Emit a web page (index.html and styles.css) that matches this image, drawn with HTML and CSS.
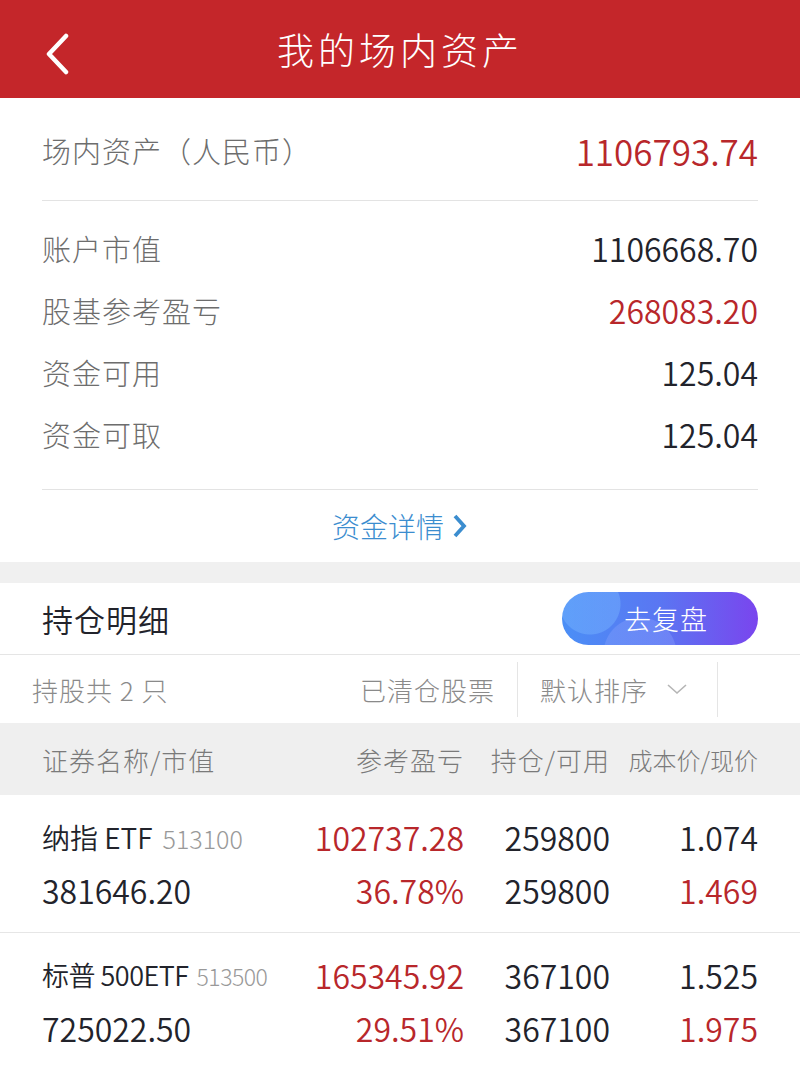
FILE: index.html
```html
<!DOCTYPE html>
<html lang="zh-CN">
<head>
    <meta charset="UTF-8">
    <title>我的场内资产</title>
    <meta name="viewport" content="width=device-width, initial-scale=1">
    <link rel="stylesheet" href="styles.css">
</head>
<body>
    <div class="topbar">
        <svg class="back" width="30" height="42" viewBox="0 0 30 42">
            <path d="M24 3 L7 21 L24 39" fill="none" stroke="#fff" stroke-width="4.5" stroke-linecap="round" stroke-linejoin="round"/>
        </svg>
        <h1>我的场内资产</h1>
    </div>

    <div class="summary">
        <div class="total">
            <span class="label">场内资产（人民币）</span>
            <span class="big red">1106793.74</span>
        </div>
        <div class="list">
            <div class="line"><span class="label">账户市值</span><span class="num">1106668.70</span></div>
            <div class="line"><span class="label">股基参考盈亏</span><span class="num red">268083.20</span></div>
            <div class="line"><span class="label">资金可用</span><span class="num">125.04</span></div>
            <div class="line"><span class="label">资金可取</span><span class="num">125.04</span></div>
        </div>
        <div class="more">
            资金详情
            <svg width="16" height="26" viewBox="0 0 16 26">
                <path d="M3 3 L12 13 L3 23" fill="none" stroke="#3b8dcf" stroke-width="3.8" stroke-linejoin="miter"/>
            </svg>
        </div>
    </div>

    <div class="holding-head">
        <h2>持仓明细</h2>
        <button class="review" type="button">去复盘</button>
    </div>

    <div class="filter">
        <span class="count">持股共 2 只</span>
        <span class="cleared">已清仓股票</span>
        <span class="sort">默认排序
            <svg width="22" height="12" viewBox="0 0 22 12">
                <path d="M2 2 L11 10 L20 2" fill="none" stroke="#b5b5b5" stroke-width="1.6"/>
            </svg>
        </span>
        <span class="blank"></span>
    </div>

    <div class="thead">
        <span>证券名称/市值</span>
        <span class="r">参考盈亏</span>
        <span class="r">持仓/可用</span>
        <span class="r small">成本价/现价</span>
    </div>

    <div class="stock">
        <span class="name">纳指 ETF<em>513100</em></span>
        <span class="r red">102737.28</span>
        <span class="r">259800</span>
        <span class="r">1.074</span>
        <span>381646.20</span>
        <span class="r red">36.78%</span>
        <span class="r">259800</span>
        <span class="r red">1.469</span>
    </div>

    <div class="stock">
        <span class="name long">标普 500ETF<em>513500</em></span>
        <span class="r red">165345.92</span>
        <span class="r">367100</span>
        <span class="r">1.525</span>
        <span>725022.50</span>
        <span class="r red">29.51%</span>
        <span class="r">367100</span>
        <span class="r red">1.975</span>
    </div>
</body>
</html>
```

FILE: styles.css
```css
body, html {
    margin: 0;
    padding: 0;
    font-family: "Noto Sans CJK SC", "Noto Sans", sans-serif;
    font-weight: 300;
    background-color: #fff;
    color: #22232b;
}

.red {
    color: #b8272b;
}

.topbar {
    height: 98px;
    background-color: #c4262a;
    display: flex;
    align-items: center;
    justify-content: center;
    position: relative;
}

.topbar .back {
    position: absolute;
    left: 42px;
    top: 33px;
}

.topbar h1 {
    margin: 0;
    color: #fff;
    font-size: 37px;
    font-weight: 300;
    letter-spacing: 4px;
}

.summary {
    padding: 0 42px;
}

.total {
    height: 103px;
    padding-top: 2px;
    box-sizing: border-box;
    display: flex;
    align-items: center;
    justify-content: space-between;
    border-bottom: 1px solid #e3e3e3;
}

.label {
    color: #6d6d6d;
    font-size: 29px;
    letter-spacing: 1px;
}

.big {
    font-size: 35px;
    font-weight: 350;
}

.list {
    padding: 16px 0 24px;
    border-bottom: 1px solid #e3e3e3;
}

.line {
    height: 62px;
    display: flex;
    align-items: center;
    justify-content: space-between;
}

.num {
    font-size: 32px;
    font-weight: 350;
}

.more {
    height: 72px;
    display: flex;
    align-items: center;
    justify-content: center;
    gap: 8px;
    color: #3b8dcf;
    font-size: 28px;
}

.holding-head {
    border-top: 21px solid #f0f0f0;
    height: 93px;
    box-sizing: border-box;
    padding: 0 42px;
    display: flex;
    align-items: center;
    justify-content: space-between;
    border-bottom: 1px solid #e5e5e5;
}

.holding-head h2 {
    margin: 0;
    font-size: 31px;
    font-weight: 350;
    letter-spacing: 1px;
}

.review {
    width: 196px;
    height: 53px;
    border: none;
    border-radius: 27px;
    color: #fff;
    font-family: inherit;
    font-weight: 300;
    font-size: 27px;
    letter-spacing: 1px;
    padding: 0 0 0 12px;
    background:
        radial-gradient(circle at 28px 12px, rgba(120, 180, 255, 0.45) 0, rgba(120, 180, 255, 0.45) 30px, transparent 31px),
        radial-gradient(circle at 78px 62px, rgba(150, 170, 255, 0.3) 0, rgba(150, 170, 255, 0.3) 36px, transparent 37px),
        linear-gradient(90deg, #4b8ff6, #5a76f2 50%, #7a45ee);
}

.filter {
    height: 68px;
    display: flex;
    align-items: center;
    color: #8a8a8a;
    font-size: 26px;
    letter-spacing: 1px;
}

.count {
    flex: 1;
    padding-left: 32px;
}

.cleared {
    padding-right: 22px;
}

.sort {
    width: 201px;
    height: 55px;
    box-sizing: border-box;
    padding-left: 22px;
    display: flex;
    align-items: center;
    gap: 18px;
    border-left: 1px solid #e5e5e5;
    border-right: 1px solid #e5e5e5;
}

.blank {
    width: 82px;
}

.thead, .stock {
    display: grid;
    grid-template-columns: 1fr 170px 146px 148px;
    padding: 0 42px;
}

.thead {
    height: 72px;
    align-items: center;
    background-color: #efefef;
    color: #7a7a7a;
    font-size: 26px;
    letter-spacing: 1px;
}

.thead .small {
    font-size: 24px;
    letter-spacing: 0;
}

.r {
    text-align: right;
}

.stock {
    padding-top: 15px;
    padding-bottom: 16px;
    grid-auto-rows: 53px;
    align-items: center;
    font-size: 32px;
    font-weight: 350;
    border-bottom: 1px solid #e6e6e6;
    white-space: nowrap;
}

.stock .name {
    font-size: 28px;
}

.stock .name em {
    font-style: normal;
    font-weight: 300;
    color: #999;
    font-size: 25px;
    margin-left: 10px;
}

.stock .long {
    font-size: 27px;
    letter-spacing: -0.5px;
}

.stock .long em {
    font-size: 23px;
    margin-left: 8px;
}
```
